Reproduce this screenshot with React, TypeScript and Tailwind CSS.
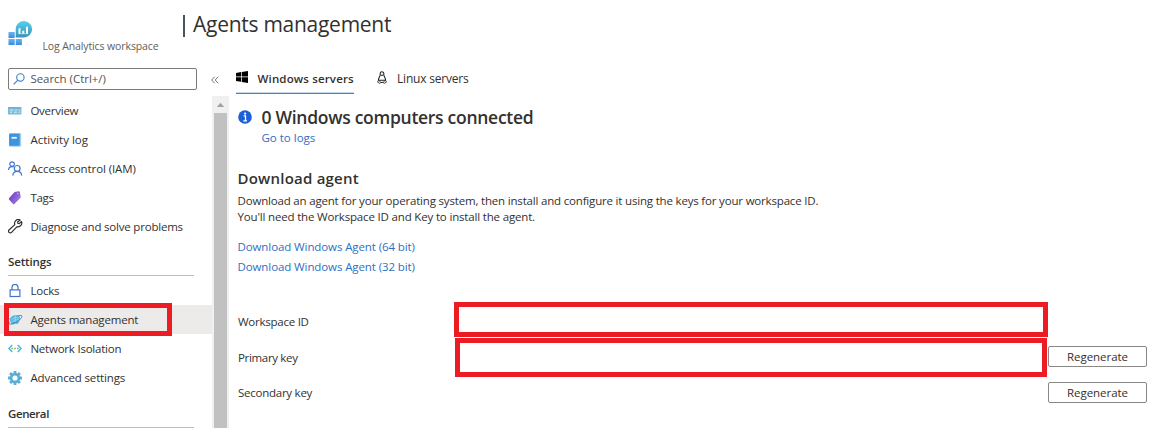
import React, { ReactNode } from "react";

function WorkspaceLogo() {
  return (
    <svg width="26" height="26" viewBox="0 0 26 26">
      <defs>
        <linearGradient id="sq" x1="0" y1="0" x2="0" y2="1">
          <stop offset="0" stopColor="#6bb4f0" />
          <stop offset="1" stopColor="#3a8ae0" />
        </linearGradient>
        <linearGradient id="drop" x1="0" y1="0" x2="0" y2="1">
          <stop offset="0" stopColor="#55d0ee" />
          <stop offset="1" stopColor="#3a94b8" />
        </linearGradient>
      </defs>
      <rect x="1.5" y="12" width="6.2" height="6" fill="url(#sq)" />
      <rect x="1.5" y="19" width="6.2" height="6" fill="url(#sq)" />
      <rect x="8.7" y="19" width="6.2" height="6" fill="url(#sq)" />
      <path d="M8.7 17.4V9A8.2 8.2 0 1 1 17 17.4Z" fill="url(#drop)" />
      <path d="M12.5 8.3v5.5M16.3 10.7v3.1M20 6.7v7.1" stroke="#fff" strokeWidth="2" />
      <path d="M11.3 13.7h10" stroke="#d6f2fa" strokeWidth=".6" />
    </svg>
  );
}

const overviewIcon = (
  <svg width="14" height="14" viewBox="0 0 14 14">
    <rect x="0" y="3.3" width="13.4" height="7.2" fill="#7cbcdc" />
    <rect x="0" y="3.3" width="13.4" height="1" fill="#5fa6cc" />
    <path d="M2 6h3.5M7 6h2M10.5 6H12M2 8.2h2M6 8.2h3M10.5 8.2H12" stroke="#d8eef8" strokeWidth="1" />
  </svg>
);

const logIcon = (
  <svg width="14" height="14" viewBox="0 0 14 14">
    <path d="M2.2 0h10q1 0 1 1v11.8q0 1-1 1h-10q-1.1 0-1.1-1V1q0-1 1.1-1Z" fill="#a3cfe8" />
    <path d="M2 .8h8.8q.9 0 .9 1v10q0 1-.9 1H2q-.9 0-.9-1v-10q0-1 .9-1Z" fill="#3f92dd" />
    <rect x="3.6" y="3.9" width="5.2" height="1.8" fill="#f4faff" />
  </svg>
);

const peopleIcon = (
  <svg width="15" height="15" viewBox="0 0 15 15" fill="none" stroke="#3f78d0" strokeWidth="1.2">
    <circle cx="4.1" cy="3.1" r="2.3" />
    <path d="M.5 9C.6 7 2 5.6 4.1 5.6q1 0 1.6.5" />
    <circle cx="9.2" cy="7.4" r="2.9" />
    <path d="M4.8 14.6c.2-2.7 1.9-4.2 4.4-4.2s4.3 1.5 4.5 4.2" />
  </svg>
);

const tagIcon = (
  <svg width="14" height="14" viewBox="0 0 14 14">
    <defs>
      <linearGradient id="tag" x1="0" y1="0" x2="1" y2=".6">
        <stop offset="0" stopColor="#6336c4" />
        <stop offset="1" stopColor="#a27bdd" />
      </linearGradient>
    </defs>
    <path d="M6.6.9 10.8.2q.8-.1 1 .6l.9 5q.1.7-.4 1.2L6.3 13.1q-.6.5-1.2 0L1 8.6q-.5-.7 0-1.4Z" fill="url(#tag)" />
    <circle cx="9.6" cy="2.4" r=".7" fill="#cdb6f2" />
  </svg>
);

const wrenchIcon = (
  <svg width="15" height="15" viewBox="0 0 15 15" fill="none" stroke="#2d2c2b" strokeWidth="1.15" strokeLinejoin="round">
    <path d="M12.2 1A3.8 3.8 0 0 0 6.8 5.6L1 11a1.7 1.7 0 0 0 2.5 2.4l5.6-5.7a3.8 3.8 0 0 0 4.4-5.2l-2.2 2.1-1.5-.3-.2-1.3Z" />
  </svg>
);

const lockIcon = (
  <svg width="14" height="14" viewBox="0 0 14 14" fill="none" stroke="#3f73d4" strokeWidth="1.2">
    <rect x="2.1" y="5.9" width="9.8" height="6.6" />
    <path d="M4 5.9V3.3a3 3 0 0 1 6 0v2.6" />
  </svg>
);

const agentIcon = (
  <svg width="15" height="14" viewBox="0 0 15 14">
    <path d="M1.4 5.8 5 2.5l5.8-.4 1.8 3.8-2.7 4.8-6 .8Z" fill="#52b4da" />
    <path d="m3.4 6.6 3.8-2.1 4 .6M3.6 8.8l3.8-2 4 .2M7.2 3v8" stroke="#a5e0f2" strokeWidth=".8" fill="none" />
    <path d="M10.5 2.9c2-.8 3.3-.7 3.4.2.2 1.8-3.3 4.9-7.1 6.7-3.2 1.5-5.6 1.7-5.9.7-.1-.6.3-1.3 1-2" fill="none" stroke="#3585ba" strokeWidth=".9" />
  </svg>
);

const networkIcon = (
  <svg width="14" height="14" viewBox="0 0 14 14" fill="none">
    <path d="M4.2 3 .9 6.5 4.2 10M9.8 3l3.3 3.5L9.8 10" stroke="#40b2e4" strokeWidth="1.4" />
    <path d="M3.4 6.5H5M6.2 6.5h1.6M9 6.5h1.6" stroke="#7fba42" strokeWidth="1.6" />
  </svg>
);

const gearIcon = (
  <svg width="14" height="14" viewBox="0 0 14 14" fill="none" stroke="#5baed6">
    <circle cx="7" cy="7" r="3.9" strokeWidth="2.7" />
    <path d="M7 0v2.4M7 11.6V14M0 7h2.4M11.6 7H14M2.1 2.1l1.7 1.7M10.2 10.2l1.7 1.7M11.9 2.1l-1.7 1.7M3.8 10.2l-1.7 1.7" strokeWidth="2.8" />
  </svg>
);

function NavItem({ icon, active, highlighted, tracking, children }: { icon: ReactNode; active?: boolean; highlighted?: boolean; tracking: string; children: string }) {
  return (
    <div className={`relative flex h-[29px] items-center pl-2 ${active ? "bg-[#edebe9]" : ""}`}>
      <span className="flex w-[15px] shrink-0 items-center">{icon}</span>
      <span className={`ml-[7.4px] whitespace-nowrap ${tracking}`}>{children}</span>
      {highlighted && <span className="absolute -top-0.5 left-1 h-[33px] w-[168px] border-5 border-[#ed1c24]" />}
    </div>
  );
}

function NavHeading({ children, className }: { children: string; className: string }) {
  return (
    <div className={`ml-2 w-[186px] border-b border-[#bfbdbb] font-semibold ${className}`}>{children}</div>
  );
}

function RegenerateButton() {
  return (
    <button className="h-[21px] w-[99px] shrink-0 rounded-[2px] border border-[#8a8886] bg-white text-center leading-[19px] tracking-[-0.04px]">
      Regenerate
    </button>
  );
}

export default function App() {
  return (
    <div className="flex h-[428px] w-[1175px] flex-col overflow-hidden bg-white font-['Open_Sans',sans-serif] text-[11.5px] text-[#323130]">
      <header className="flex h-[67px] shrink-0">
        <div className="w-[35px] shrink-0 pt-5 pl-[7px]">
          <WorkspaceLogo />
        </div>
        <div className="w-[147px] shrink-0 pt-[39px] pl-[7.4px] text-[10.5px] leading-[15px] tracking-[-0.11px] whitespace-nowrap text-[#605e5c]">
          Log Analytics workspace
        </div>
        <div className="flex h-12 items-center">
          <span className="mt-[3px] ml-px h-[22px] w-[1.5px] bg-[#4a5560]" />
          <h1 className="ml-[8.5px] text-[21px] leading-7 tracking-[-0.27px] whitespace-nowrap">Agents management</h1>
        </div>
      </header>

      <div className="flex min-h-0 flex-1">
        <aside className="flex w-[229px] shrink-0 flex-col">
          <div className="flex h-[29px] shrink-0 items-start pt-px pl-2">
            <div className="flex h-[22px] w-[189px] items-center rounded-[2px] border border-[#7d7b79] pl-1 text-[#55524f]">
              <svg width="12" height="12" viewBox="0 0 12 12" fill="none" stroke="#3f7fc8" strokeWidth="1.1">
                <circle cx="7.4" cy="4.4" r="3.7" />
                <path d="M4.8 7.1.6 11.4" />
              </svg>
              <span className="ml-[5.4px] tracking-[-0.03px]">Search (Ctrl+/)</span>
            </div>
            <svg className="mt-[8px] ml-[13.5px]" width="8" height="8" viewBox="0 0 8 8" fill="none" stroke="#7a7876" strokeWidth="1">
              <path d="M3.7.7.7 4l3 3.3M7.2.7l-3 3.3 3 3.3" />
            </svg>
          </div>
          <div className="flex min-h-0 flex-1">
            <nav className="w-[212px]">
              <NavItem icon={overviewIcon} tracking="tracking-[-0.25px]">Overview</NavItem>
              <NavItem icon={logIcon} tracking="tracking-[0.03px]">Activity log</NavItem>
              <NavItem icon={peopleIcon} tracking="tracking-[-0.1px]">Access control (IAM)</NavItem>
              <NavItem icon={tagIcon} tracking="tracking-[-0.3px]">Tags</NavItem>
              <NavItem icon={wrenchIcon} tracking="tracking-[-0.2px]">Diagnose and solve problems</NavItem>
              <NavHeading className="h-[35px] pt-3 tracking-[-0.15px]">Settings</NavHeading>
              <NavItem icon={lockIcon} tracking="tracking-[-0.2px]">Locks</NavItem>
              <NavItem icon={agentIcon} active highlighted tracking="tracking-[-0.19px]">Agents management</NavItem>
              <NavItem icon={networkIcon} tracking="tracking-[-0.22px]">Network Isolation</NavItem>
              <NavItem icon={gearIcon} tracking="tracking-[-0.15px]">Advanced settings</NavItem>
              <NavHeading className="h-[36px] pt-[13px] tracking-[-0.4px]">General</NavHeading>
            </nav>
            <div className="flex w-[17px] flex-col items-center bg-[#f0f0f0]">
              <svg width="17" height="17" viewBox="0 0 17 17">
                <path d="M4.8 11 8.5 6.8 12.2 11Z" fill="#a3a3a3" />
              </svg>
              <div className="w-[13px] flex-1 bg-[#c1c1c1]" />
            </div>
          </div>
        </aside>

        <main className="flex min-w-0 flex-1 flex-col pl-[7px]">
          <div className="flex h-[27px] shrink-0 text-[12px]">
            <div className="flex w-[118px] items-center border-b border-[#3f84cf] pb-[3px] shadow-[inset_0_-1px_0_#c3daf1]">
              <svg className="mb-[3px]" width="12" height="12" viewBox="0 0 12 12" fill="#000">
                <path d="M0 1.9 5 1.1v4.4H0ZM5.7 1 12 0v5.5H5.7ZM0 6.2h5v4.5L0 10ZM5.7 6.2H12V12l-6.3-1.1Z" />
              </svg>
              <span className="ml-[9.5px] text-[11.5px] font-semibold tracking-[0.15px] whitespace-nowrap">Windows servers</span>
            </div>
            <div className="ml-[23px] flex items-center pb-1">
              <svg className="mb-0.5" width="10" height="13" viewBox="0 0 10 13" fill="none" stroke="#222">
                <path d="M3.2 4.1V2.6a1.8 1.8 0 0 1 3.6 0v1.5c0 1.2 1.8 2.8 1.8 5.1H1.4c0-2.3 1.8-3.9 1.8-5.1Z" strokeWidth="1.1" />
                <path d="M.5 11.2 1.8 9l2 2.6-1 .8ZM9.5 11.2 8.2 9l-2 2.6 1 .8Z" fill="#fff" strokeWidth=".8" />
                <path d="M4 3.9h2L5 5Z" fill="#222" strokeWidth=".5" />
                <path d="M3.8 11.4h2.4" />
              </svg>
              <span className="ml-[10px] tracking-[-0.2px] whitespace-nowrap">Linux servers</span>
            </div>
          </div>

          <div className="flex h-[74px] shrink-0 pt-[11px] pl-[1.5px]">
            <svg className="mt-[5px] shrink-0" width="14" height="14" viewBox="0 0 14 14">
              <circle cx="7" cy="7" r="6.8" fill="#1b5fd9" />
              <circle cx="7.1" cy="3.6" r="1.1" fill="#fff" />
              <path d="M5.6 5.9h1.9v5M5.3 10.8h3.7" stroke="#fff" strokeWidth="1.3" fill="none" />
            </svg>
            <div className="ml-[10px]">
              <h2 className="text-[17.5px] leading-6 font-semibold tracking-[-0.28px] whitespace-nowrap">0 Windows computers connected</h2>
              <a className="mt-px block leading-4 text-[#2f6fc4]">Go to logs</a>
            </div>
          </div>

          <section className="h-[134px] shrink-0 pl-[1.5px]">
            <h3 className="text-[15px] leading-5 font-semibold tracking-[0.22px]">Download agent</h3>
            <p className="mt-[5px] leading-4 tracking-[-0.182px] whitespace-nowrap">
              Download an agent for your operating system, then install and configure it using the keys for your workspace ID.
            </p>
            <p className="leading-4 tracking-[-0.17px] whitespace-nowrap">You'll need the Workspace ID and Key to install the agent.</p>
            <div className="mt-3 leading-5 tracking-[-0.1px] text-[#2f6fc4]">
              <a className="block">Download Windows Agent (64 bit)</a>
              <a className="block">Download Windows Agent (32 bit)</a>
            </div>
          </section>

          <section className="flex flex-col pl-0.5">
            <div className="flex h-[35px] items-center">
              <span className="w-[216px] pt-1 tracking-[-0.25px]">Workspace ID</span>
              <div className="h-[35px] w-[594px] border-5 border-[#ed1c24]" />
            </div>
            <div className="mt-px flex h-[39px] items-center">
              <span className="w-[217px] tracking-[-0.33px]">Primary key</span>
              <div className="mr-px h-[39px] w-[592px] border-5 border-[#ed1c24]" />
              <div className="pb-0.5"><RegenerateButton /></div>
            </div>
            <div className="flex h-[31px] items-center">
              <span className="w-[810px] tracking-[-0.25px]">Secondary key</span>
              <RegenerateButton />
            </div>
          </section>
        </main>
      </div>
    </div>
  );
}
